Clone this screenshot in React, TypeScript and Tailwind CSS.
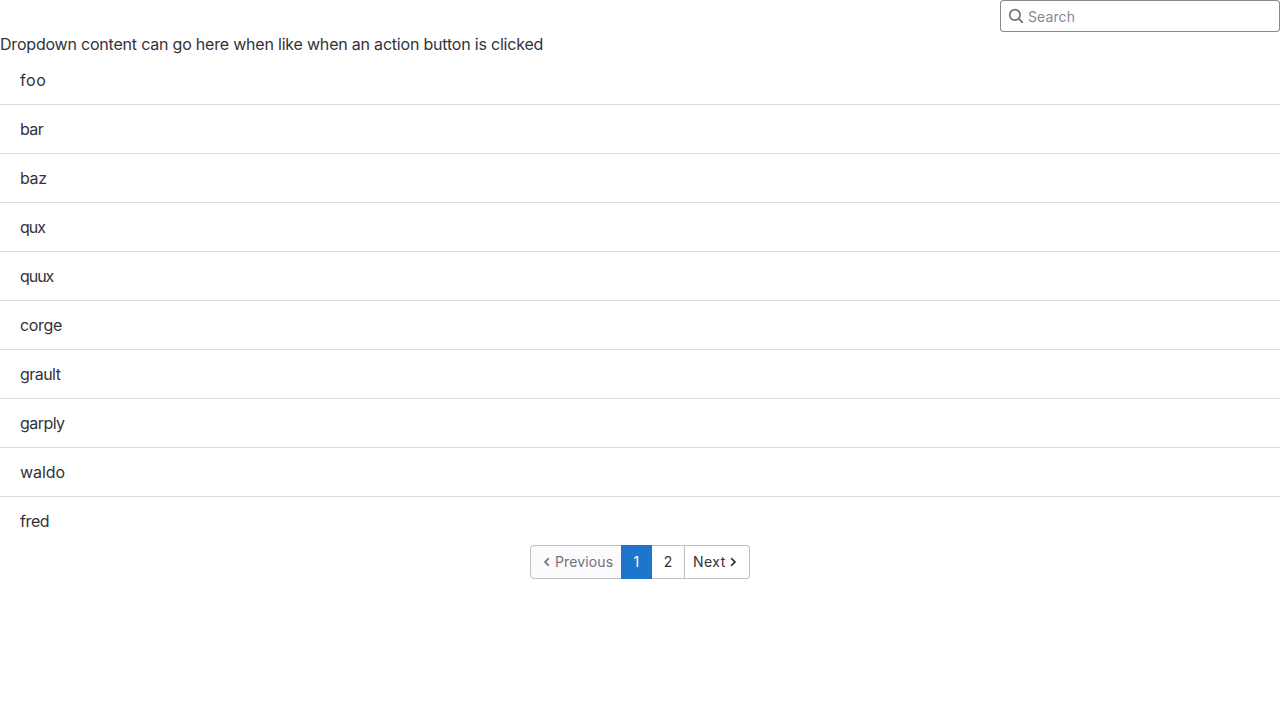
const items = [
  { name: 'foo', tracking: 'tracking-[0.55px]' },
  { name: 'bar', tracking: 'tracking-[-0.65px]' },
  { name: 'baz', tracking: 'tracking-[-0.35px]' },
  { name: 'qux', tracking: 'tracking-[-1px]' },
  { name: 'quux', tracking: 'tracking-[-1.05px]' },
  { name: 'corge', tracking: 'tracking-[-0.35px]' },
  { name: 'grault', tracking: 'tracking-[-0.55px]' },
  { name: 'garply', tracking: 'tracking-[-0.55px]' },
  { name: 'waldo', tracking: 'tracking-[-0.05px]' },
  { name: 'fred', tracking: 'tracking-[-0.4px]' },
];

export default function App() {
  return (
    <div className="flex flex-col bg-white font-['Inter',sans-serif] text-base text-[#333238]">
      <header className="flex justify-end">
        <label className="flex h-8 w-[280px] items-center gap-1 rounded bg-white pl-2 shadow-[inset_0_0_0_1px_#89888d]">
          <svg className="size-4 shrink-0 fill-none stroke-[#737278]" viewBox="0 0 16 16" aria-hidden="true">
            <circle cx="6.9" cy="6.9" r="5.2" strokeWidth="1.7" />
            <path d="M10.9 10.9l3.3 3.3" strokeWidth="1.9" strokeLinecap="round" />
          </svg>
          <input className="min-w-0 flex-1 bg-transparent pt-px text-sm tracking-[0.1px] outline-none placeholder:text-[#89888d]" type="text" placeholder="Search" />
        </label>
      </header>
      <div className="leading-6 tracking-[-0.205px]">Dropdown content can go here when like when an action button is clicked</div>
      <ul>
        {items.map(({ name, tracking }) => (
          <li key={name} className={`border-b border-[#dcdcde] px-5 py-3 leading-6 last:border-b-0 ${tracking}`}>
            {name}
          </li>
        ))}
      </ul>
      <nav className="flex justify-center text-sm leading-4 tracking-[0.12px]">
        <span className="flex h-[34px] w-[92px] items-center rounded-l border border-[#bfbfc3] bg-[#fbfafd] pl-2 text-[#737278]">
          <svg className="size-4 fill-current stroke-current stroke-[0.4]" viewBox="0 0 16 16" aria-hidden="true">
            <path fillRule="evenodd" d="M9.78 4.22a.75.75 0 0 1 0 1.06L7.06 8l2.72 2.72a.75.75 0 1 1-1.06 1.06L5.47 8.53a.75.75 0 0 1 0-1.06l3.25-3.25a.75.75 0 0 1 1.06 0z" />
          </svg>
          Previous
        </span>
        <a className="-ml-px flex h-[34px] w-[31px] items-center justify-center bg-[#1f75cb] text-white">1</a>
        <a className="flex h-[34px] w-[33px] items-center justify-center border-y border-r border-[#bfbfc3]">2</a>
        <a className="flex h-[34px] w-[65px] items-center rounded-r border border-l-0 border-[#bfbfc3] pl-2 tracking-[0.45px]">
          Next
          <svg className="-ml-px size-4 fill-current stroke-current stroke-[0.4]" viewBox="0 0 16 16" aria-hidden="true">
            <path fillRule="evenodd" d="M6.22 4.22a.75.75 0 0 1 1.06 0l3.25 3.25a.75.75 0 0 1 0 1.06l-3.25 3.25a.75.75 0 0 1-1.06-1.06L8.94 8 6.22 5.28a.75.75 0 0 1 0-1.06z" />
          </svg>
        </a>
      </nav>
    </div>
  );
}
